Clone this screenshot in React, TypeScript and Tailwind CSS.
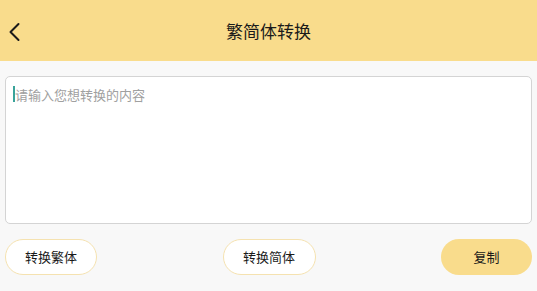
import React from "react";

export default function App() {
  return (
    <div className="w-[537px] h-[291px] bg-[#f8f8f8] flex flex-col" style={{ fontFamily: '"Noto Sans CJK SC", "Noto Sans", sans-serif' }}>
      <div className="h-[61px] bg-[#f9dc8c] flex items-center relative shrink-0">
        <svg className="absolute left-[8px] top-[22px]" width="13" height="20" viewBox="0 0 13 20" fill="none">
          <path d="M10.5 2 L2.5 10 L10.5 18" stroke="#1a1a1a" strokeWidth="2" strokeLinecap="round" strokeLinejoin="round" />
        </svg>
        <div className="flex-1 text-center text-[17px] text-[#1a1a1a] leading-none">繁简体转换</div>
      </div>
      <div className="px-[5px] pt-[15px]">
        <div className="h-[148px] bg-white border border-[#d4d4d4] rounded-[5px] px-[7px] pt-[9px] flex items-start">
          <span className="w-[2px] h-[16px] bg-[#3aa39a]"></span>
          <span className="text-[13px] text-[#a0a0a0] leading-[17px]">请输入您想转换的内容</span>
        </div>
      </div>
      <div className="px-[5px] pt-[15px] flex justify-between items-center">
        <div className="w-[92px] h-[36px] rounded-full bg-white border border-[#f5e2b0] flex items-center justify-center text-[13px] text-[#1a1a1a]">转换繁体</div>
        <div className="w-[93px] h-[36px] rounded-full bg-white border border-[#f5e2b0] flex items-center justify-center text-[13px] text-[#1a1a1a]">转换简体</div>
        <div className="w-[91px] h-[36px] rounded-full bg-[#f9dc8c] flex items-center justify-center text-[13px] text-[#1a1a1a]">复制</div>
      </div>
    </div>
  );
}
